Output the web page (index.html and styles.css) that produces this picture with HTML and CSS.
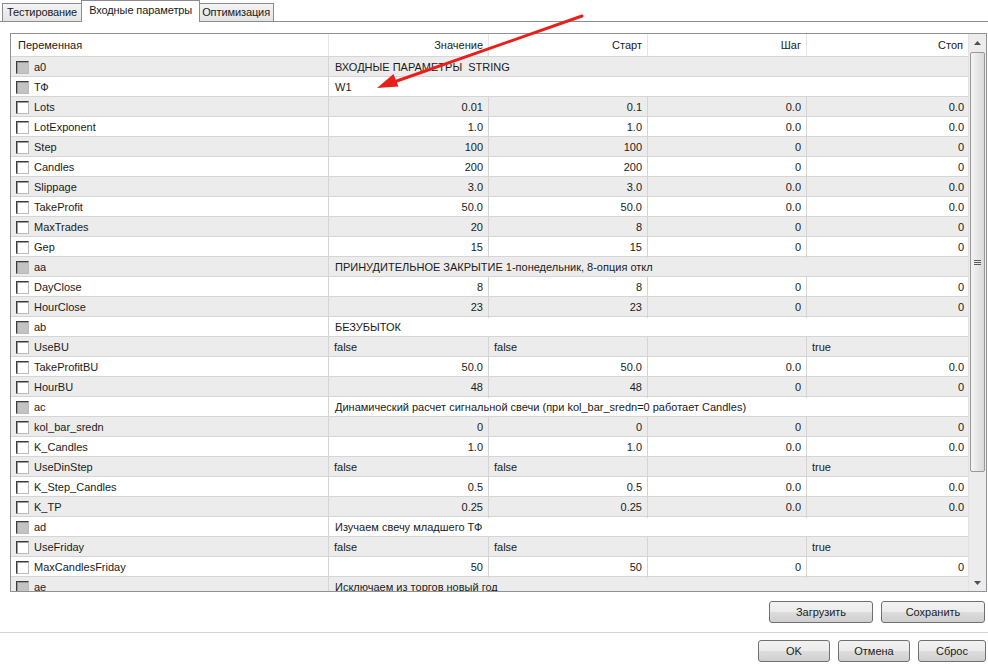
FILE: index.html
```html
<!DOCTYPE html>
<html lang="ru">
<head>
	<meta charset="utf-8">
	<title>Входные параметры</title>
	<link rel="stylesheet" href="styles.css">
</head>
<body>
	<div class="tabs">
		<div class="tab">Тестирование</div>
		<div class="tab active">Входные параметры</div>
		<div class="tab last">Оптимизация</div>
	</div>

	<div class="panel">
		<div class="grid">
			<div class="grid-main">
				<div class="head">
					<div class="hc left">Переменная</div>
					<div class="hc">Значение</div>
					<div class="hc">Старт</div>
					<div class="hc">Шаг</div>
					<div class="hc">Стоп</div>
				</div>
				<div class="rows">
					<div class="row odd group"><div class="name"><span class="cb dis"></span>a0</div><div class="span">ВХОДНЫЕ ПАРАМЕТРЫ&nbsp; STRING</div></div>
					<div class="row group"><div class="name"><span class="cb dis"></span>ТФ</div><div class="span">W1</div></div>
					<div class="row odd"><div class="name"><span class="cb"></span>Lots</div><div class="c">0.01</div><div class="c">0.1</div><div class="c">0.0</div><div class="c">0.0</div></div>
					<div class="row"><div class="name"><span class="cb"></span>LotExponent</div><div class="c">1.0</div><div class="c">1.0</div><div class="c">0.0</div><div class="c">0.0</div></div>
					<div class="row odd"><div class="name"><span class="cb"></span>Step</div><div class="c">100</div><div class="c">100</div><div class="c">0</div><div class="c">0</div></div>
					<div class="row"><div class="name"><span class="cb"></span>Candles</div><div class="c">200</div><div class="c">200</div><div class="c">0</div><div class="c">0</div></div>
					<div class="row odd"><div class="name"><span class="cb"></span>Slippage</div><div class="c">3.0</div><div class="c">3.0</div><div class="c">0.0</div><div class="c">0.0</div></div>
					<div class="row"><div class="name"><span class="cb"></span>TakeProfit</div><div class="c">50.0</div><div class="c">50.0</div><div class="c">0.0</div><div class="c">0.0</div></div>
					<div class="row odd"><div class="name"><span class="cb"></span>MaxTrades</div><div class="c">20</div><div class="c">8</div><div class="c">0</div><div class="c">0</div></div>
					<div class="row"><div class="name"><span class="cb"></span>Gep</div><div class="c">15</div><div class="c">15</div><div class="c">0</div><div class="c">0</div></div>
					<div class="row odd group"><div class="name"><span class="cb dis"></span>aa</div><div class="span">ПРИНУДИТЕЛЬНОЕ ЗАКРЫТИЕ 1-понедельник, 8-опция откл</div></div>
					<div class="row"><div class="name"><span class="cb"></span>DayClose</div><div class="c">8</div><div class="c">8</div><div class="c">0</div><div class="c">0</div></div>
					<div class="row odd"><div class="name"><span class="cb"></span>HourClose</div><div class="c">23</div><div class="c">23</div><div class="c">0</div><div class="c">0</div></div>
					<div class="row group"><div class="name"><span class="cb dis"></span>ab</div><div class="span">БЕЗУБЫТОК</div></div>
					<div class="row odd"><div class="name"><span class="cb"></span>UseBU</div><div class="c l">false</div><div class="c l">false</div><div class="c l"></div><div class="c l">true</div></div>
					<div class="row"><div class="name"><span class="cb"></span>TakeProfitBU</div><div class="c">50.0</div><div class="c">50.0</div><div class="c">0.0</div><div class="c">0.0</div></div>
					<div class="row odd"><div class="name"><span class="cb"></span>HourBU</div><div class="c">48</div><div class="c">48</div><div class="c">0</div><div class="c">0</div></div>
					<div class="row group"><div class="name"><span class="cb dis"></span>ac</div><div class="span">Динамический расчет сигнальной свечи (при kol_bar_sredn=0 работает Candles)</div></div>
					<div class="row odd"><div class="name"><span class="cb"></span>kol_bar_sredn</div><div class="c">0</div><div class="c">0</div><div class="c">0</div><div class="c">0</div></div>
					<div class="row"><div class="name"><span class="cb"></span>K_Candles</div><div class="c">1.0</div><div class="c">1.0</div><div class="c">0.0</div><div class="c">0.0</div></div>
					<div class="row odd"><div class="name"><span class="cb"></span>UseDinStep</div><div class="c l">false</div><div class="c l">false</div><div class="c l"></div><div class="c l">true</div></div>
					<div class="row"><div class="name"><span class="cb"></span>K_Step_Candles</div><div class="c">0.5</div><div class="c">0.5</div><div class="c">0.0</div><div class="c">0.0</div></div>
					<div class="row odd"><div class="name"><span class="cb"></span>K_TP</div><div class="c">0.25</div><div class="c">0.25</div><div class="c">0.0</div><div class="c">0.0</div></div>
					<div class="row group"><div class="name"><span class="cb dis"></span>ad</div><div class="span">Изучаем свечу младшего ТФ</div></div>
					<div class="row odd"><div class="name"><span class="cb"></span>UseFriday</div><div class="c l">false</div><div class="c l">false</div><div class="c l"></div><div class="c l">true</div></div>
					<div class="row"><div class="name"><span class="cb"></span>MaxCandlesFriday</div><div class="c">50</div><div class="c">50</div><div class="c">0</div><div class="c">0</div></div>
					<div class="row odd group"><div class="name"><span class="cb dis"></span>ae</div><div class="span">Исключаем из торгов новый год</div></div>
				</div>
			</div>
			<div class="scroll">
				<div class="sbtn"><svg width="7" height="4" viewBox="0 0 7 4"><path d="M0 4L3.5 0L7 4Z" fill="#505050"/></svg></div>
				<div class="thumb"><span class="grip"></span></div>
				<div class="sbtn down"><svg width="7" height="4" viewBox="0 0 7 4"><path d="M0 0L3.5 4L7 0Z" fill="#505050"/></svg></div>
			</div>
		</div>
	</div>

	<div class="bar-top">
		<button class="btn wide">Загрузить</button>
		<button class="btn wide">Сохранить</button>
	</div>
	<div class="sep"></div>
	<div class="bar-bottom">
		<button class="btn">OK</button>
		<button class="btn">Отмена</button>
		<button class="btn small">Сброс</button>
	</div>

	<!-- красная стрелка поверх таблицы -->
	<svg class="arrow" width="988" height="100" viewBox="0 0 988 100">
		<line x1="582" y1="16" x2="394" y2="82" stroke="#e8201c" stroke-width="3" stroke-linecap="round"/>
		<path d="M377 88L398.5 86.5L393.5 74Z" fill="#e8201c"/>
	</svg>
</body>
</html>
```

FILE: styles.css
```css
body {
	margin: 0;
	width: 988px;
	height: 668px;
	overflow: hidden;
	position: relative;
	background: #fff;
	color: #1a1a1a;
	font: 11px "Liberation Sans", Arial, sans-serif;
}

.tabs {
	display: flex;
	align-items: flex-end;
	height: 21px;
	padding-left: 2px;
	border-bottom: 1px solid #898c95;
}

.tab {
	box-sizing: border-box;
	height: 18px;
	padding: 0 4px;
	line-height: 17px;
	letter-spacing: -0.1px;
	border: 1px solid #898c95;
	border-bottom: none;
	background: linear-gradient(#f3f3f3, #e4e4e4);
}

.tab.last {
	padding: 0 3px;
	border-left: none;
}

.tab.active {
	position: relative;
	z-index: 1;
	height: 22px;
	margin: 0 -1px -1px -1px;
	padding: 0 7px;
	line-height: 18px;
	background: #fff;
}

.panel {
	padding: 11px 1px 0 10px;
}

.grid {
	display: flex;
	box-sizing: border-box;
	width: 977px;
	height: 559px;
	border: 1px solid #8e9196;
}

.grid-main {
	display: flex;
	flex-direction: column;
	width: 958px;
	overflow: hidden;
}

.head,
.row {
	display: grid;
	grid-template-columns: 318px 160px 159px 159px 162px;
	box-sizing: border-box;
	flex-shrink: 0;
}

.head {
	height: 23px;
	border-bottom: 1px solid #d5d5d5;
}

.hc {
	padding: 0 5px;
	line-height: 22px;
	text-align: right;
	border-right: 1px solid #e5e5e5;
}

.hc.left {
	text-align: left;
	padding-left: 7px;
}

.rows {
	flex: 1;
	overflow: hidden;
}

.row {
	height: 20px;
	line-height: 21px;
	border-bottom: 1px solid #d5d5d5;
}

.row.odd {
	background: #ececec;
}

.name {
	display: flex;
	align-items: center;
	gap: 5px;
	padding-left: 5px;
	border-right: 1px solid #d5d5d5;
}

.cb {
	box-sizing: border-box;
	width: 13px;
	height: 13px;
	background: #fff;
	border: 1px solid;
	border-color: #3c3c3c #b9b9b9 #b9b9b9 #3c3c3c;
	box-shadow: inset 1px 1px 0 #9a9a9a;
}

.cb.dis {
	background: #c3c3c3;
}

.c {
	padding-right: 5px;
	text-align: right;
	border-right: 1px solid #d5d5d5;
	white-space: nowrap;
}

.c:last-child {
	border-right: none;
}

.c.l {
	padding-left: 5px;
	text-align: left;
}

.span {
	grid-column: span 4;
	padding-left: 6px;
	white-space: nowrap;
}

.scroll {
	display: flex;
	flex-direction: column;
	width: 17px;
	background: #ececec;
	border-left: 1px solid #e2e2e2;
}

.sbtn {
	display: flex;
	align-items: center;
	justify-content: center;
	height: 17px;
}

.sbtn.down {
	margin-top: auto;
}

.thumb {
	display: flex;
	align-items: center;
	justify-content: center;
	height: 418px;
	margin: 1px 1px 0 1px;
	border: 1px solid #989898;
	border-radius: 2px;
	background: linear-gradient(90deg, #f4f4f4, #dadada);
}

.grip {
	width: 7px;
	height: 5px;
	background: repeating-linear-gradient(#5c5c5c 0 1px, transparent 1px 2px);
}

.btn {
	box-sizing: border-box;
	height: 22px;
	width: 72px;
	padding: 0;
	font: 11px "Liberation Sans", Arial, sans-serif;
	color: #1a1a1a;
	border: 1px solid #707070;
	border-radius: 3px;
	background: linear-gradient(#f2f2f2 0, #ebebeb 50%, #dddddd 51%, #cfcfcf 100%);
}

.btn.wide {
	width: 104px;
}

.btn.small {
	width: 68px;
}

.bar-top {
	display: flex;
	justify-content: flex-end;
	gap: 8px;
	padding: 9px 3px 0 0;
}

.sep {
	height: 1px;
	margin-top: 9px;
	background: #d2d2d2;
}

.bar-bottom {
	display: flex;
	justify-content: flex-end;
	gap: 8px;
	padding: 7px 2px 0 0;
}

.arrow {
	position: absolute;
	top: 0;
	left: 0;
	pointer-events: none;
}
```
